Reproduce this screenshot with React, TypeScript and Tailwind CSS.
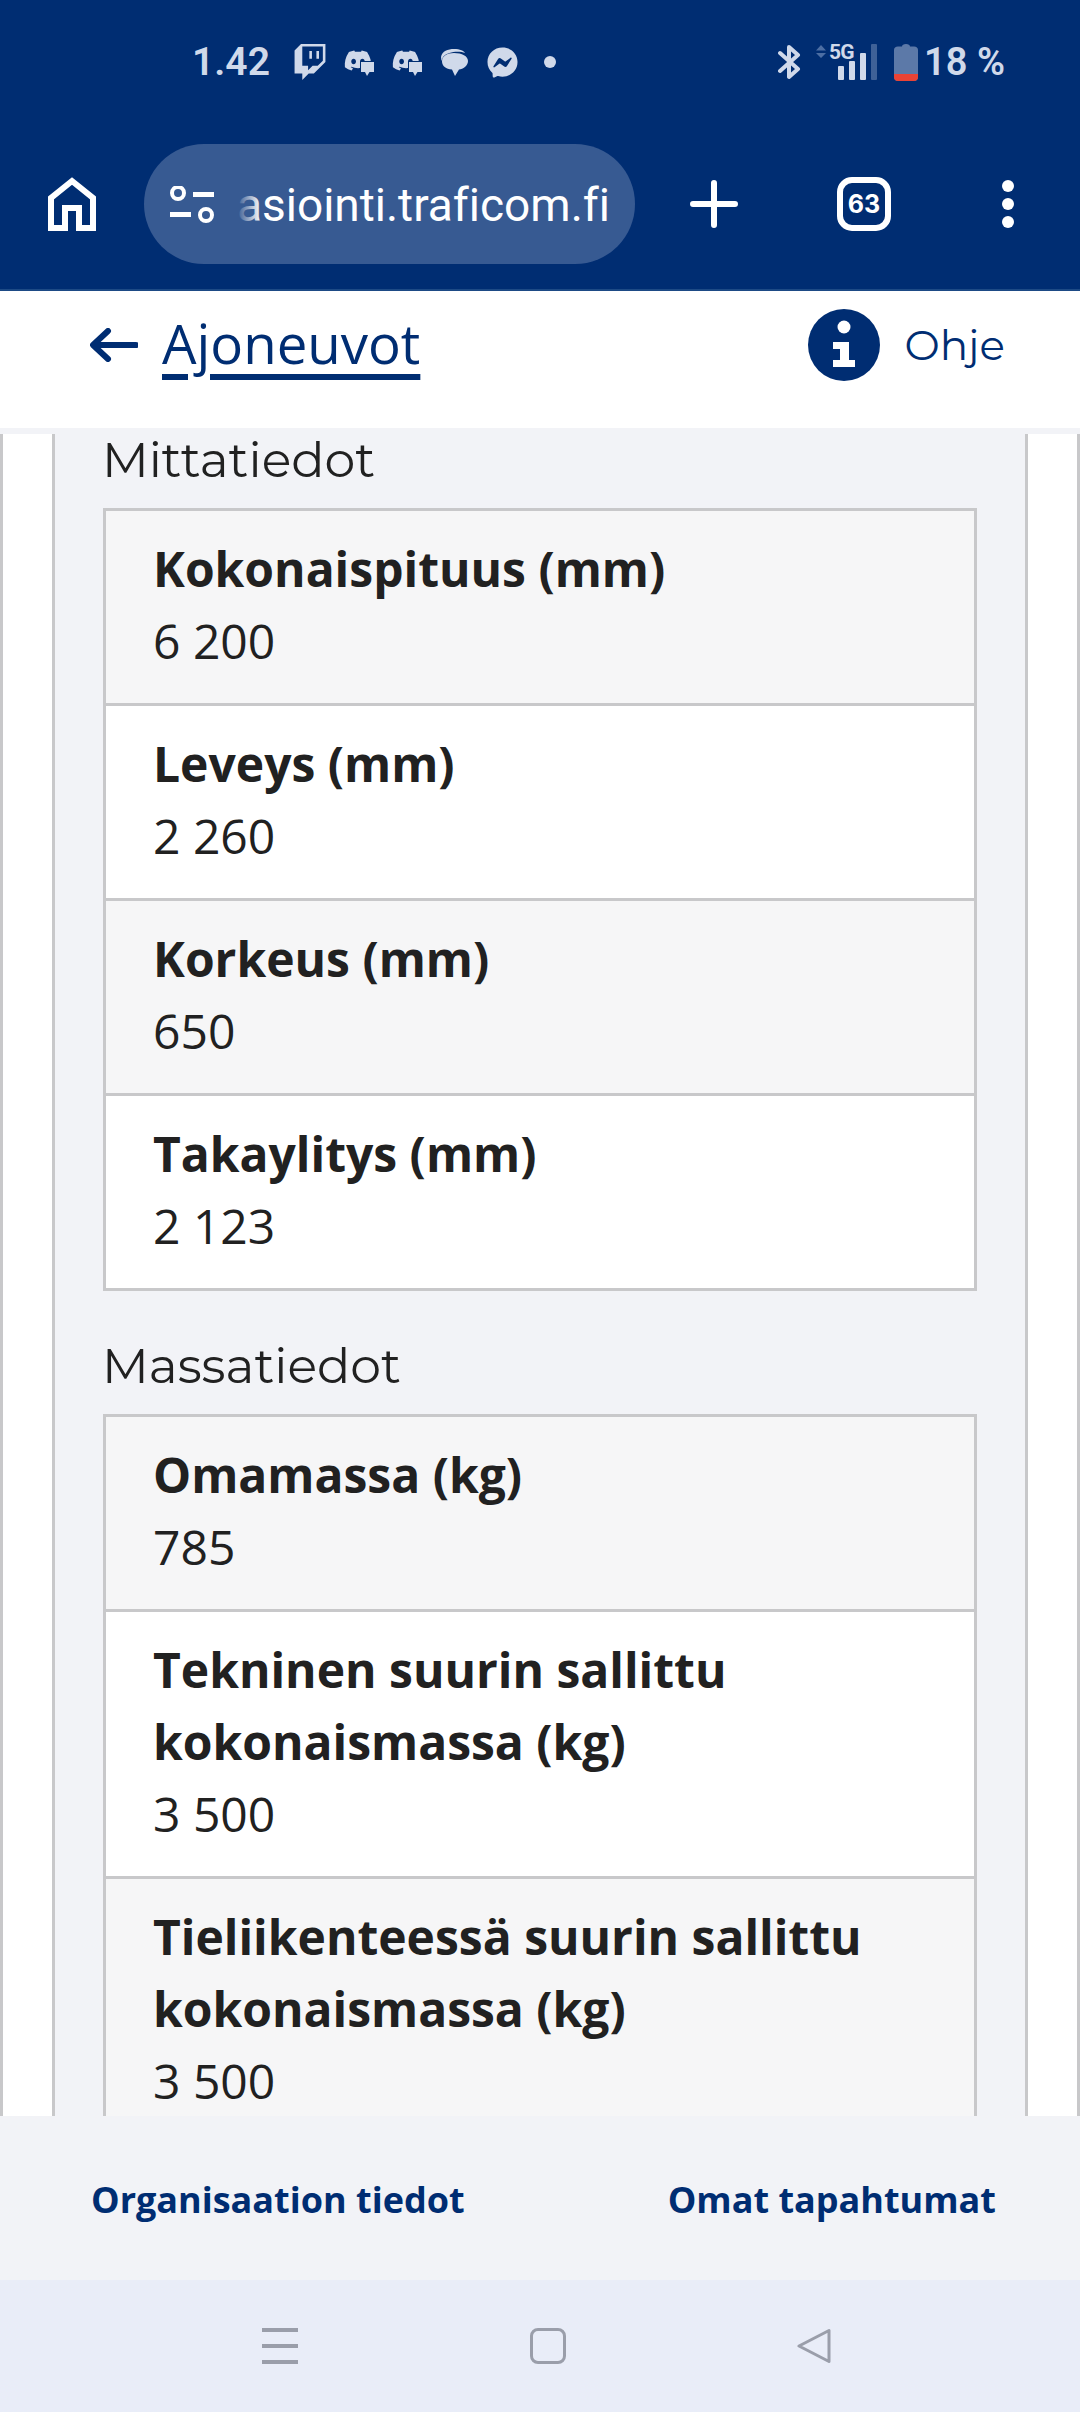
import React from "react";
import { FaDiscord, FaFacebookMessenger } from "react-icons/fa6";
import { SiTwitch } from "react-icons/si";

function DiscordChat({ className }: { className: string }) {
  return (
    <div className={`relative w-[31px] h-[27px] shrink-0 ${className}`}>
      <FaDiscord className="absolute left-0 top-0 w-[30px] h-[23px] text-[#d0d9ea]" />
      <svg viewBox="0 0 16 17" className="absolute left-[17px] top-[12px] w-[16px] h-[17px]">
        <path d="M-2 -2H18V13H10L7 19L4 13H-2Z" fill="#002d72" />
        <path d="M1 1H14V11H9.5L7 15L5 11H1Z" fill="#d0d9ea" />
      </svg>
    </div>
  );
}

function Bubble({ className }: { className: string }) {
  return (
    <svg viewBox="0 0 28 28" className={`w-[28px] h-[28px] shrink-0 ${className}`}>
      <path d="M1 9C2 3 8 1 14 1C20 1 24 3 25 5C20 3 8 3 3 9L1.500 13Z" fill="#d0d9ea" />
      <path d="M14 5C22 5 28 8 28 13C28 18 23 21 19 21.500L15 28L12 21.500C6 21 2 18 2 13.500C2 8 7 5 14 5Z" fill="#d0d9ea" />
    </svg>
  );
}

function Bluetooth({ className }: { className: string }) {
  return (
    <svg viewBox="0 0 23 36" className={`w-[23px] h-[36px] shrink-0 ${className}`}>
      <path d="M2 9L20 25L11 33V3L20 11L2 27" fill="none" stroke="#d0d9ea" strokeWidth="4" strokeLinecap="round" strokeLinejoin="round" />
    </svg>
  );
}

function Signal({ className }: { className: string }) {
  return (
    <div className={`relative w-[61px] h-[36px] shrink-0 ${className}`}>
      <svg viewBox="0 0 61 36" className="absolute inset-0 w-[61px] h-[36px]">
        <path d="M0 6.500L5 1L10 6.500Z M0 9L10 9L5 14Z" fill="#4c6ea3" />
        <rect x="22" y="22" width="6" height="14" rx="1" fill="#d0d9ea" />
        <rect x="33" y="17" width="6" height="19" rx="1" fill="#d0d9ea" />
        <rect x="44" y="9" width="6" height="27" rx="1" fill="#d0d9ea" />
        <rect x="55" y="0" width="6" height="36" rx="1" fill="#3f6197" />
      </svg>
      <span className="absolute left-[13px] top-[-3px] font-['Roboto',sans-serif] font-bold text-[21px] leading-[22px] tracking-[-1px] text-[#d0d9ea]">5G</span>
    </div>
  );
}

function Battery({ className }: { className: string }) {
  return (
    <svg viewBox="0 0 24 37" className={`w-[24px] h-[37px] shrink-0 ${className}`}>
      <path d="M8 2.500C8 1 9.500 0 12 0C14.500 0 16 1 16 2.500H20C22.500 2.500 24 4 24 6V33C24 35.500 22.500 37 20 37H4C1.500 37 0 35.500 0 33V6C0 4 1.500 2.500 4 2.500Z" fill="#5c79a8" />
      <path d="M0 30H24V33C24 35.500 22.500 37 20 37H4C1.500 37 0 35.500 0 33Z" fill="#ea4335" />
    </svg>
  );
}

function Row({ label, value, shade, last }: { label: string; value: string; shade: boolean; last?: boolean }) {
  return (
    <div className={`pl-[47px] pr-[50px] pt-[22px] pb-[26px] ${last ? "" : "border-b-[3px] border-[#c8c8ca]"} ${shade ? "bg-[#f6f6f7]" : "bg-white"}`}>
      <div className="text-[48px] leading-[72px] font-bold text-[#212121]">{label}</div>
      <div className="text-[48px] leading-[72px] text-[#212121]">{value}</div>
    </div>
  );
}

function Heading({ children, className }: { children: React.ReactNode; className: string }) {
  return <div className={`h-[74px] -ml-[1px] font-['Montserrat',sans-serif] text-[49px] leading-[52px] text-[#212121] ${className}`}>{children}</div>;
}

export default function App() {
  return (
    <div className="w-[1080px] h-[2412px] flex flex-col overflow-hidden font-['Open_Sans',sans-serif] bg-white">
      <div className="h-[291px] shrink-0 bg-[#002d72] border-b-2 border-[#1d4a85]">
        <div className="h-[124px] flex items-center justify-between pl-[192px] pr-[75px] text-[#d0d9ea]">
          <div className="flex items-center">
            <span className="font-['Roboto',sans-serif] font-semibold text-[39px] leading-[44px] w-[75px]">1.42</span>
            <SiTwitch className="ml-[25px] w-[36px] h-[36px] text-[#d0d9ea]" />
            <DiscordChat className="ml-[15px]" />
            <DiscordChat className="ml-[17px]" />
            <Bubble className="ml-[18px]" />
            <FaFacebookMessenger className="ml-[19px] w-[31px] h-[31px] text-[#d0d9ea]" />
            <div className="ml-[26px] w-[12px] h-[12px] rounded-full bg-[#d0d9ea]" />
          </div>
          <div className="flex items-center">
            <Bluetooth className="" />
            <Signal className="ml-[15px]" />
            <Battery className="ml-[17px]" />
            <span className="ml-[6px] font-['Roboto',sans-serif] font-semibold text-[38px] leading-[44px] whitespace-nowrap">18 %</span>
          </div>
        </div>
        <div className="mt-[20px] h-[120px] flex items-center">
          <svg viewBox="0 0 48 54" className="ml-[48px] w-[48px] h-[54px] shrink-0">
            <path d="M3 51V21L24 4L45 21V51H31V31H17V51Z" fill="none" stroke="#fff" strokeWidth="6" />
          </svg>
          <div className="ml-[48px] w-[491px] h-[120px] rounded-full bg-[#375a92] flex items-center pl-[26px] pr-[25px] shrink-0">
            <svg viewBox="0 0 44 37" className="w-[44px] h-[37px] shrink-0">
              <circle cx="8" cy="7" r="6" fill="none" stroke="#fff" strokeWidth="4" />
              <path d="M23 8.500H44M0 28.500H21" stroke="#fff" strokeWidth="5" />
              <circle cx="36" cy="29" r="6" fill="none" stroke="#fff" strokeWidth="4" />
            </svg>
            <div className="relative ml-auto flex pt-[2px]">
              <span className="font-['Roboto',sans-serif] [font-variant-ligatures:none] text-[46px] leading-[60px] text-white whitespace-nowrap">asiointi.traficom.fi</span>
              <div className="absolute left-0 top-0 bottom-0 w-[24px] bg-gradient-to-r from-[#375a92] to-transparent" />
            </div>
          </div>
          <svg viewBox="0 0 48 48" className="ml-[55px] w-[48px] h-[48px] shrink-0">
            <path d="M24 3V45M3 24H45" stroke="#fff" strokeWidth="6" strokeLinecap="round" />
          </svg>
          <div className="ml-[99px] w-[54px] h-[54px] rounded-[15px] border-[6px] border-white flex items-center justify-center shrink-0">
            <span className="font-['Inter',sans-serif] font-bold text-[25px] leading-[30px] text-white">63</span>
          </div>
          <div className="ml-[111px] flex flex-col gap-[6px] shrink-0">
            <div className="w-[12px] h-[12px] rounded-full bg-white" />
            <div className="w-[12px] h-[12px] rounded-full bg-white" />
            <div className="w-[12px] h-[12px] rounded-full bg-white" />
          </div>
        </div>
      </div>

      <div className="h-[137px] shrink-0 bg-white flex items-center justify-between pl-[90px] pr-[75px] pb-[30px]">
        <div className="flex items-center">
          <svg viewBox="0 0 48 34" className="w-[48px] h-[34px] shrink-0">
            <path d="M46 17H4M18 3L3 17L18 31" fill="none" stroke="#002d72" strokeWidth="6" strokeLinecap="round" strokeLinejoin="round" />
          </svg>
          <span className="ml-[24px] text-[54.6px] leading-[72px] -mt-[4px] text-[#002d72] underline decoration-[6px] underline-offset-[10px]">Ajoneuvot</span>
        </div>
        <div className="flex items-center">
          <svg viewBox="0 0 72 72" className="w-[72px] h-[72px] shrink-0">
            <circle cx="36" cy="36" r="36" fill="#002d72" />
            <circle cx="36" cy="18" r="6.500" fill="#fff" />
            <path d="M25 33H41V51H47V58H25V51H32V40H25Z" fill="#fff" />
          </svg>
          <span className="ml-[24px] font-['Montserrat',sans-serif] text-[42px] leading-[50px] text-[#002d72]">Ohje</span>
        </div>
      </div>

      <div className="flex-1 min-h-0 overflow-hidden bg-[#f2f3f7] pt-[6px]">
        <div className="h-full bg-white border-x-[3px] border-[#c8c8ca] px-[49px]">
          <div className="h-full bg-[#f2f3f7] border-x-[3px] border-[#c8c8ca] px-[48px]">
            <Heading className="">Mittatiedot</Heading>
            <div className="border-[3px] border-[#c8c8ca]">
              <Row label="Kokonaispituus (mm)" value="6 200" shade />
              <Row label="Leveys (mm)" value="2 260" shade={false} />
              <Row label="Korkeus (mm)" value="650" shade />
              <Row label="Takaylitys (mm)" value="2 123" shade={false} last />
            </div>
            <Heading className="mt-[49px]">Massatiedot</Heading>
            <div className="border-[3px] border-[#c8c8ca]">
              <Row label="Omamassa (kg)" value="785" shade />
              <Row label="Tekninen suurin sallittu kokonaismassa (kg)" value="3 500" shade={false} />
              <Row label="Tieliikenteessä suurin sallittu kokonaismassa (kg)" value="3 500" shade last />
            </div>
          </div>
        </div>
      </div>

      <div className="h-[164px] shrink-0 bg-[#f2f3f7] flex items-center justify-between pl-[91px] pr-[84px] pt-[3px]">
        <span className="text-[36px] leading-[48px] font-bold text-[#002d72]">Organisaation tiedot</span>
        <span className="text-[36px] leading-[48px] font-bold text-[#002d72]">Omat tapahtumat</span>
      </div>

      <div className="h-[132px] shrink-0 bg-[#e9edf8] flex items-center pl-[262px]">
        <svg viewBox="0 0 36 36" className="w-[36px] h-[36px] shrink-0">
          <path d="M0 2H36M0 18H36M0 34H36" stroke="#9a9eaa" strokeWidth="4" />
        </svg>
        <div className="ml-[232px] w-[36px] h-[36px] rounded-[8px] border-[3px] border-[#9a9eaa] shrink-0" />
        <svg viewBox="0 0 34 36" className="ml-[231px] w-[34px] h-[36px] shrink-0">
          <path d="M32 2.500V33.500L2 18Z" fill="none" stroke="#9a9eaa" strokeWidth="3" strokeLinejoin="round" />
        </svg>
      </div>
    </div>
  );
}
